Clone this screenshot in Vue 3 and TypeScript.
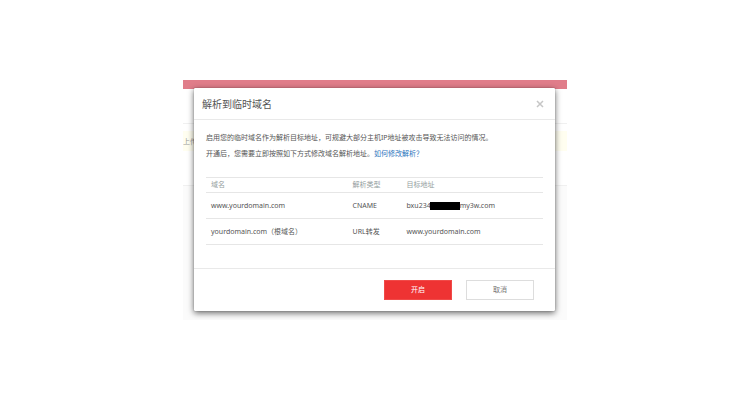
<script setup lang="ts">
interface DnsRecord {
  domain: string
  type: string
  target: string
  masked?: boolean
  suffix?: string
}

const records: DnsRecord[] = [
  { domain: 'www.yourdomain.com', type: 'CNAME', target: 'bxu234', masked: true, suffix: 'my3w.com' },
  { domain: 'yourdomain.com（根域名）', type: 'URL转发', target: 'www.yourdomain.com' },
]
</script>

<template>
  <main class="page">
    <div class="stage">
      <div class="backdrop">
        <div class="topbar"></div>
        <div class="band"></div>
        <div class="section">
          <div class="notice">上传</div>
        </div>
        <div class="rest"></div>
      </div>

      <section class="dialog" role="dialog" aria-labelledby="dialog-title">
        <header class="head">
          <h1 id="dialog-title" class="title">解析到临时域名</h1>
          <button class="close" type="button" aria-label="关闭">
            <svg viewBox="0 0 8 8" width="8" height="8">
              <path d="M1 1L7 7M7 1L1 7" stroke="#c6c6c6" stroke-width="1.5" fill="none" />
            </svg>
          </button>
        </header>

        <div class="body">
          <p class="line">启用您的临时域名作为解析目标地址，可规避大部分主机IP地址被攻击导致无法访问的情况。</p>
          <p class="line">开通后，您需要立即按照如下方式修改域名解析地址。<a class="help" href="#">如何修改解析？</a></p>

          <table class="records">
            <thead>
              <tr>
                <th class="col-domain">域名</th>
                <th class="col-type">解析类型</th>
                <th>目标地址</th>
              </tr>
            </thead>
            <tbody>
              <tr v-for="record in records" :key="record.domain">
                <td>{{ record.domain }}</td>
                <td>{{ record.type }}</td>
                <td>{{ record.target }}<span v-if="record.masked" class="mask"></span>{{ record.suffix }}</td>
              </tr>
            </tbody>
          </table>
        </div>

        <footer class="foot">
          <button class="btn primary" type="button">开启</button>
          <button class="btn" type="button">取消</button>
        </footer>
      </section>
    </div>
  </main>
</template>

<style>
body {
  background: #fff;
}
</style>

<style scoped>
.page {
  padding: 80px 183px;
  font-family: "Noto Sans", "Noto Sans CJK SC", sans-serif;
  font-size: 7px;
  color: #555;
}

.stage {
  display: grid;
  overflow: hidden;
}

.backdrop,
.dialog {
  grid-area: 1 / 1;
}

.backdrop {
  display: flex;
  flex-direction: column;
}

.topbar {
  height: 9px;
  background: #e07d8a;
}

.band {
  height: 34px;
  border-bottom: 1px solid #f0f0f0;
}

.section {
  padding: 7px 0 34px;
}

.notice {
  height: 20px;
  line-height: 22px;
  background: #fffef0;
  color: #999;
}

.rest {
  flex: 1;
  border-top: 1px solid #f0f0f0;
  background: #fbfbfb;
}

.dialog {
  margin: 8px 12px 9px 11px;
  background: #fff;
  border-radius: 1px;
  box-shadow: 0 0 1px rgba(0, 0, 0, 0.5), 0 2px 6px rgba(0, 0, 0, 0.6);
}

.head {
  display: flex;
  align-items: center;
  justify-content: space-between;
  height: 31px;
  padding: 0 11px 0 8px;
  border-bottom: 1px solid #e9e9e9;
}

.title {
  margin: 0;
  font-size: 10px;
  font-weight: 400;
  line-height: 16px;
  color: #555;
}

.close {
  display: flex;
  padding: 0;
  border: 0;
  background: none;
}

.body {
  padding: 10px 12px 23px;
}

.line {
  margin: 0;
  line-height: 16px;
}

.help {
  color: #2b74bd;
  text-decoration: none;
}

.records {
  width: 100%;
  margin-top: 15px;
  border-collapse: separate;
  border-spacing: 0;
  border-top: 1px solid #e6e6e6;
  table-layout: fixed;
}

.records th,
.records td {
  box-sizing: border-box;
  padding: 0 5px;
  border-bottom: 1px solid #e6e6e6;
  text-align: left;
  font-weight: 400;
  white-space: nowrap;
}

.records th {
  height: 15px;
  line-height: 14px;
  color: #949e9e;
}

.records td {
  height: 26px;
  line-height: 24px;
}

.col-domain {
  width: 42%;
}

.col-type {
  width: 16%;
}

.mask {
  display: inline-block;
  width: 30px;
  height: 8px;
  margin-left: -1px;
  background: #000;
  vertical-align: middle;
}

.foot {
  display: flex;
  justify-content: flex-end;
  gap: 14px;
  padding: 11px 21px 11px 0;
  border-top: 1px solid #e9e9e9;
}

.btn {
  width: 68px;
  height: 20px;
  padding: 0;
  border: 1px solid #ddd;
  background: #fff;
  color: #777;
  font-family: inherit;
  font-size: 7px;
  line-height: 16px;
}

.primary {
  border-color: #f04a48;
  background: #ee3333;
  color: #fff;
}
</style>
